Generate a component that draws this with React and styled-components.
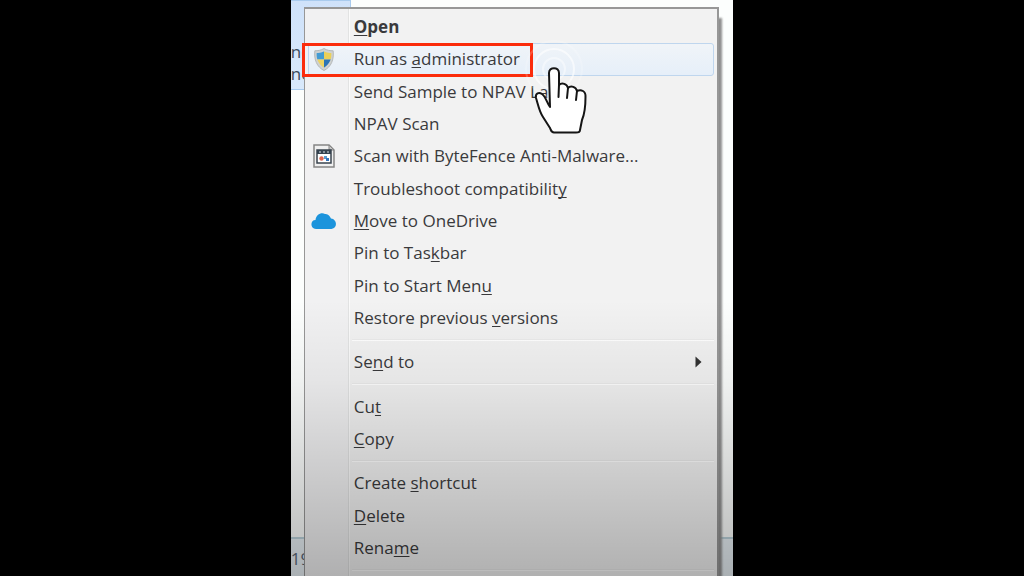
import React from "react";
import styled, { createGlobalStyle, css } from "styled-components";

const GlobalStyle = createGlobalStyle`
  * { box-sizing: border-box; }
  body {
    margin: 0;
    background: #000;
    font-family: "Open Sans", "Noto Sans", sans-serif;
  }
`;

const Stage = styled.main`
  display: flex;
  justify-content: center;
  height: 100vh;
  overflow: hidden;
  background: #000;
`;

const Screen = styled.section`
  position: relative;
  display: flex;
  width: 43.2%;
  padding: 7px 14px 0 13px;
  overflow: hidden;
  background: #fcfefd;
`;

const Desktop = styled.div`
  position: absolute;
  inset: 0;
  display: flex;
  flex-direction: column;
  justify-content: space-between;
`;

const FileTile = styled.div`
  width: 60px;
  height: 90px;
  padding-top: 40px;
  overflow: hidden;
  border: 1px solid #a9cbee;
  border-left: 0;
  background: linear-gradient(#cfe2fa, #d9e9fb);
  color: #3c4a5c;
  font-size: 17px;
  line-height: 22px;
`;

const StatusStrip = styled.div`
  height: 39px;
  padding-top: 9px;
  border-top: 2px solid #bcd3dc;
  background: #e9f1f6;
  color: #5b6878;
  font-size: 17px;
  line-height: 22px;
`;

const Menu = styled.div`
  position: relative;
  display: flex;
  flex: 1;
  flex-direction: column;
  padding: 2px 3px 0;
  border: 1px solid #979797;
  border-width: 2px 2px 0 1px;
  background: linear-gradient(
    90deg,
    #f1f1f2 43px,
    #e2e3e3 43px,
    #e2e3e3 44px,
    #fbfbfb 44px,
    #fbfbfb 45px,
    #f2f2f2 45px
  );
  box-shadow: 4px 10px 2px -1px #8f8f8f;
`;

const Item = styled.button`
  position: relative;
  display: grid;
  flex: 1 1 32px;
  grid-template-columns: 30px 1fr 20px;
  column-gap: 15px;
  align-items: center;
  min-height: 0;
  padding: 0;
  border: 1px solid transparent;
  border-radius: 3px;
  background: transparent;
  color: #3a3a3c;
  font-family: inherit;
  font-size: 17px;
  font-weight: ${(p) => (p.$bold ? 700 : 400)};
  line-height: 24px;
  text-align: left;
  ${(p) =>
    p.$active &&
    css`
      z-index: 1;
      border-color: #bfd6ee;
      background: linear-gradient(#f0f4f8, #e6eff9);
    `}
`;

const IconSlot = styled.span`
  display: flex;
  justify-content: center;
`;

const Label = styled.span`
  white-space: nowrap;
`;

const Key = styled.u`
  text-decoration-thickness: 1px;
  text-underline-offset: 2px;
  text-decoration-skip-ink: none;
`;

const Separator = styled.hr`
  flex: 0 0 2px;
  width: auto;
  margin: 5px 0 5px 44px;
  border: 0;
  border-top: 1px solid #ebebeb;
  border-bottom: 1px solid #ffffff;
`;

const Callout = styled.span`
  position: absolute;
  top: -1px;
  left: -7px;
  width: 231px;
  height: 34px;
  border: 3px solid #fb2c0c;
  pointer-events: none;
`;

const Pointer = styled.svg`
  position: absolute;
  top: -13px;
  left: 206px;
  width: 90px;
  height: 106px;
  pointer-events: none;
`;

const Shade = styled.div`
  position: absolute;
  inset: 0;
  background: linear-gradient(
    rgba(0, 0, 0, 0) 52%,
    rgba(0, 0, 0, 0.05) 66%,
    rgba(0, 0, 0, 0.27) 100%
  );
  pointer-events: none;
`;

const ShieldIcon = () => (
  <svg width="22" height="25" viewBox="0 0 24 26" aria-hidden="true">
    <defs>
      <clipPath id="shield">
        <path d="M12 4C9 6 6 6 4 6C3.500 13 6 18 12 22C18 18 20.500 13 20 6C18 6 15 6 12 4Z" />
      </clipPath>
    </defs>
    <path
      d="M12 1C9 3 5 3.500 2 3.500C1 13 4 21 12 25C20 21 23 13 22 3.500C19 3.500 15 3 12 1Z"
      fill="#cfd2d1"
      stroke="#b0b3b4"
    />
    <g clipPath="url(#shield)">
      <path d="M0 0H12V13H0Z" fill="#439bd3" />
      <path d="M12 0H24V13H12Z" fill="#ebd058" />
      <path d="M0 13H12V26H0Z" fill="#ecd463" />
      <path d="M12 13H24V26H12Z" fill="#2b74b5" />
    </g>
  </svg>
);

const ProgramIcon = () => (
  <svg width="22" height="24" viewBox="0 0 22 24" aria-hidden="true">
    <path d="M1 1H16L21 6V23H1Z" fill="#f0f0f0" stroke="#858585" strokeWidth="1.500" />
    <path d="M16 1V6H21Z" fill="#c6c6c6" stroke="#858585" />
    <path d="M4 6H18V19H4Z" fill="#fff" stroke="#39434e" strokeWidth="1.500" />
    <path d="M4 6H18V10H4Z" fill="#35424f" />
    <path d="M6 8H8M10 8H12M14 8H16" stroke="#d8e2ea" />
    <circle cx="8.500" cy="14.500" r="2.200" fill="#dc6550" />
    <path d="M11 12H14V15H11Z" fill="#5c9cd0" />
    <path d="M13 14H16V17H13Z" fill="#3473ba" />
  </svg>
);

const CloudIcon = () => (
  <svg width="26" height="18" viewBox="0 0 26 18" aria-hidden="true">
    <path
      d="M5 17C-1 17-1 8 4.500 8C5 3 10 0 14 2C17 1.500 19 4 20 6.500C26 7 27 16 20.500 17Z"
      fill="#1c94dc"
    />
  </svg>
);

const ArrowIcon = () => (
  <svg width="10" height="12" viewBox="0 0 10 12" aria-hidden="true">
    <path d="M2.500 0.500L8.500 6L2.500 11.500Z" fill="#333" />
  </svg>
);

const HandPointer = () => (
  <Pointer viewBox="0 0 90 106" aria-hidden="true">
    <g fill="none" stroke="#fff">
      <circle cx="39" cy="38" r="28" strokeOpacity="0.200" strokeWidth="2" />
      <circle cx="39" cy="38" r="20" strokeOpacity="0.600" strokeWidth="2" />
      <circle cx="39" cy="38" r="11" strokeOpacity="0.450" strokeWidth="2" />
    </g>
    <g fill="#fff" stroke="#151515" strokeWidth="2" strokeLinejoin="round" strokeLinecap="round">
      <path d="M35 76L34 42C34 35.500 44 35.500 44 42V54C47 51 52 53 53 57C56 54 61 56 62 60C66 58 71 60 70.500 66C70.500 75 70 82 67 89L65 99C65 101 63 101.500 61 101.500H39C36 101.500 36 99 35 97L28 86C24 80 23 73 21 67C20 62 24 61 27 63C31 66 32 72 35 76Z" />
      <path d="M44 54L43.500 66M53 57L52 67M62 60L61 69" fill="none" />
    </g>
  </Pointer>
);

const groups = [
  [
    { text: ["", "O", "pen"], bold: true },
    { text: ["Run as ", "a", "dministrator"], icon: <ShieldIcon />, active: true },
    { text: ["Send Sample to NPAV Lab"] },
    { text: ["NPAV Scan"] },
    { text: ["Scan with ByteFence Anti-Malware..."], icon: <ProgramIcon /> },
    { text: ["Troubleshoot compatibilit", "y", ""] },
    { text: ["", "M", "ove to OneDrive"], icon: <CloudIcon /> },
    { text: ["Pin to Tas", "k", "bar"] },
    { text: ["Pin to Start Men", "u", ""] },
    { text: ["Restore previous ", "v", "ersions"] },
  ],
  [{ text: ["Se", "n", "d to"], submenu: true }],
  [{ text: ["Cu", "t", ""] }, { text: ["", "C", "opy"] }],
  [
    { text: ["Create ", "s", "hortcut"] },
    { text: ["", "D", "elete"] },
    { text: ["Rena", "m", "e"] },
  ],
];

const MenuItem = ({ text, icon, bold, active, submenu }) => (
  <Item type="button" role="menuitem" $bold={bold} $active={active}>
    <IconSlot>{icon}</IconSlot>
    <Label>
      {text[0]}
      {text[1] && <Key>{text[1]}</Key>}
      {text[2]}
    </Label>
    {submenu && <ArrowIcon />}
    {active && <Callout />}
    {active && <HandPointer />}
  </Item>
);

export default function App() {
  return (
    <>
      <GlobalStyle />
      <Stage>
        <Screen>
          <Desktop>
            <FileTile>
              ne
              <br />
              ne
            </FileTile>
            <StatusStrip>19</StatusStrip>
          </Desktop>
          <Menu role="menu">
            {groups.map((items, i) => (
              <React.Fragment key={i}>
                {items.map((item) => (
                  <MenuItem key={item.text.join("")} {...item} />
                ))}
                <Separator />
              </React.Fragment>
            ))}
          </Menu>
          <Shade />
        </Screen>
      </Stage>
    </>
  );
}
